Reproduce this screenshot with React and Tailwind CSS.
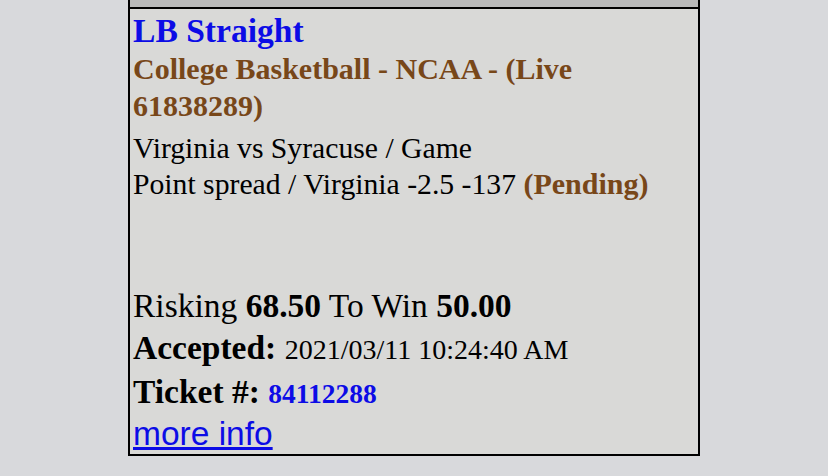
import React from "react";

const serif = "font-['Liberation_Serif','Times_New_Roman',serif]";

const App = () => {
  return (
    <div className={`min-h-screen w-full bg-[#d8d9dc] ${serif}`}>
      <div className="ml-[128px] w-[572px]">
        {/* strip of the row above */}
        <div className="h-[7px] border-x-2 border-black bg-[#b9b9b9]" />
        <div className="border-2 border-black bg-[#d9d9d7] pl-[3px] pr-2 text-black">
          <div className="pt-px text-[33.6px] font-bold leading-[41px] text-[#0c0ce6]">LB Straight</div>
          <div className="text-[30px] font-bold leading-[36.5px] text-[#784719]">
            College Basketball - NCAA - (Live 61838289)
          </div>
          <div className="mt-[7px] text-[29.7px] leading-[35px]">
            <div>Virginia vs Syracuse / Game</div>
            <div>
              Point spread / Virginia -2.5 -137{" "}
              <span className="text-[30px] font-bold text-[#784719]">(Pending)</span>
            </div>
          </div>
          <div className="mt-[83px] text-[33.5px] leading-[42px]">
            <div>
              Risking <b>68.50</b> To Win <b>50.00</b>
            </div>
            <div>
              <b>Accepted:</b> <span className="text-[28px]">2021/03/11 10:24:40 AM</span>
            </div>
            <div className="leading-[41px]">
              <b>Ticket #:</b> <b className="text-[27.5px] text-[#0c0ce6]">84112288</b>
            </div>
            <div className="leading-[40px]">
              <a href="#" className="font-['Liberation_Sans',Arial,sans-serif] text-[#0c0ce6] underline">
                more info
              </a>
            </div>
          </div>
        </div>
      </div>
    </div>
  );
};

export default App;
